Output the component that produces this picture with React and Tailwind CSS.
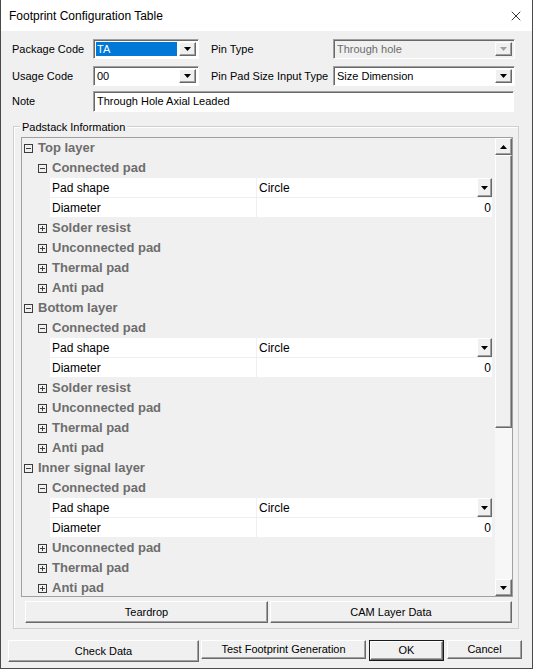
import { X } from "lucide-react";

const raised =
  "border border-t-white border-l-white border-r-[#696969] border-b-[#696969] shadow-[inset_-1px_-1px_0_#a0a0a0]";
const sunken =
  "border border-t-[#a0a0a0] border-l-[#a0a0a0] border-r-white border-b-white shadow-[inset_1px_1px_0_#696969]";

const Arrow = ({ dir = "down", disabled }) => (
  <svg width="7" height="4" viewBox="0 0 7 4" className={dir === "up" ? "rotate-180" : ""}>
    <path d="M0 0h7L3.5 4z" fill={disabled ? "#a0a0a0" : "#000"} />
  </svg>
);

const DropBtn = ({ disabled, className = "" }) => (
  <div className={`flex items-center justify-center bg-[#f0f0f0] ${raised} ${className}`}>
    <Arrow disabled={disabled} />
  </div>
);

const Combo = ({ value, width, selected, disabled }) => (
  <div
    className={`flex h-[20px] items-stretch p-[2px] ${sunken} ${disabled ? "bg-[#f0f0f0]" : "bg-white"}`}
    style={{ width }}
  >
    <div className="flex flex-1 items-center pr-[2px]">
      <span
        className={`flex h-full flex-1 items-center pl-[1px] text-[11px] ${
          selected ? "bg-[#0078d7] text-white" : disabled ? "text-[#6d6d6d]" : "text-black"
        }`}
      >
        {value}
      </span>
    </div>
    <DropBtn disabled={disabled} className="w-[17px]" />
  </div>
);

const Button = ({ children, className = "", def }) => (
  <div className={def ? "border border-[#1a1a1a]" : ""}>
    <div className={`flex h-full items-center justify-center bg-[#f0f0f0] text-[11px] text-black ${raised} ${className}`}>
      {children}
    </div>
  </div>
);

const Box = ({ open }) => (
  <span className="relative inline-block h-[9px] w-[9px] shrink-0 border border-[#3c3c3c]">
    <span className="absolute left-[1px] top-[3px] h-px w-[5px] bg-[#3c3c3c]" />
    {!open && <span className="absolute left-[3px] top-[1px] h-[5px] w-px bg-[#3c3c3c]" />}
  </span>
);

const rows = [
  { t: "g", label: "Top layer", open: true },
  { t: "s", label: "Connected pad", open: true },
  { t: "p", label: "Pad shape", value: "Circle", drop: true },
  { t: "p", label: "Diameter", value: "0" },
  { t: "s", label: "Solder resist" },
  { t: "s", label: "Unconnected pad" },
  { t: "s", label: "Thermal pad" },
  { t: "s", label: "Anti pad" },
  { t: "g", label: "Bottom layer", open: true },
  { t: "s", label: "Connected pad", open: true },
  { t: "p", label: "Pad shape", value: "Circle", drop: true },
  { t: "p", label: "Diameter", value: "0" },
  { t: "s", label: "Solder resist" },
  { t: "s", label: "Unconnected pad" },
  { t: "s", label: "Thermal pad" },
  { t: "s", label: "Anti pad" },
  { t: "g", label: "Inner signal layer", open: true },
  { t: "s", label: "Connected pad", open: true },
  { t: "p", label: "Pad shape", value: "Circle", drop: true },
  { t: "p", label: "Diameter", value: "0" },
  { t: "s", label: "Unconnected pad" },
  { t: "s", label: "Thermal pad" },
  { t: "s", label: "Anti pad" },
];

const TreeRow = ({ row }) => {
  if (row.t === "p") {
    return (
      <div className="ml-[28px] mr-[3px] flex h-[20px] border-b border-[#f0f0f0] bg-white text-[12px] text-black">
        <div className="flex w-[207px] items-center border-r border-[#f0f0f0] pl-[2px]">{row.label}</div>
        {row.drop ? (
          <div className="flex flex-1 items-center justify-between pl-[2px]">
            <span>{row.value}</span>
            <DropBtn className="h-[19px] w-[15px]" />
          </div>
        ) : (
          <div className="flex flex-1 items-center justify-end pr-[1px]">{row.value}</div>
        )}
      </div>
    );
  }
  return (
    <div className={`flex h-[20px] items-center gap-[5px] ${row.t === "g" ? "pl-[2px]" : "pl-[16px]"}`}>
      <Box open={row.open} />
      <span className="text-[13px] font-bold text-[#6d6d6d]">{row.label}</span>
    </div>
  );
};

export default function App() {
  return (
    <div className="flex h-[669px] w-[533px] flex-col overflow-hidden border-x border-b border-[#4a4a4a] bg-[#f0f0f0] font-['Liberation_Sans',Arial,sans-serif] text-black">
      {/* title bar */}
      <div className="flex h-[31px] shrink-0 items-center justify-between bg-white pl-[8px] pr-[8px]">
        <span className="text-[12px]">Footprint Configuration Table</span>
        <X size={16} strokeWidth={1.2} className="text-black" />
      </div>

      {/* header fields */}
      <div className="pl-[11px] pt-[8px] text-[11px]">
        <div className="flex h-[20px] items-center">
          <span className="w-[81px]">Package Code</span>
          <Combo value="TA" width={106} selected />
          <span className="ml-[12px] w-[122px]">Pin Type</span>
          <Combo value="Through hole" width={182} disabled />
        </div>
        <div className="mt-[7px] flex h-[20px] items-center">
          <span className="w-[81px]">Usage Code</span>
          <Combo value="00" width={106} />
          <span className="ml-[12px] w-[122px]">Pin Pad Size Input Type</span>
          <Combo value="Size Dimension" width={182} />
        </div>
        <div className="mt-[5px] flex h-[21px] items-center">
          <span className="w-[81px]">Note</span>
          <div className={`flex h-[21px] w-[421px] items-center bg-white pl-[3px] text-[11px] ${sunken}`}>
            Through Hole Axial Leaded
          </div>
        </div>
      </div>

      {/* padstack group */}
      <div className="relative ml-[12px] mt-[14px] w-[506px] border border-[#cfcfcf] pb-[5px] pl-[7px] pr-[5px] pt-[10px] shadow-[inset_1px_1px_0_white]">
        <span className="absolute -top-[8px] left-[6px] bg-[#f0f0f0] px-[2px] text-[11px]">Padstack Information</span>

        <div className="flex h-[460px] border border-[#a0a0a0]">
          <div className="flex-1 overflow-hidden">
            {rows.map((r, i) => (
              <TreeRow key={i} row={r} />
            ))}
          </div>
          <div className="flex w-[17px] flex-col bg-[#f7f7f7]">
            <div className={`flex h-[17px] items-center justify-center bg-[#f0f0f0] ${raised}`}>
              <Arrow dir="up" />
            </div>
            <div className={`h-[273px] bg-[#f0f0f0] ${raised}`} />
            <div className="flex-1" />
            <div className={`flex h-[17px] items-center justify-center bg-[#f0f0f0] ${raised}`}>
              <Arrow />
            </div>
          </div>
        </div>

        <div className="mt-[4px] flex h-[22px] gap-[2px] pl-[4px]">
          <Button className="w-[243px]">Teardrop</Button>
          <Button className="w-[242px]">CAM Layer Data</Button>
        </div>
      </div>

      {/* bottom buttons */}
      <div className="mt-[11px] flex h-[22px] pl-[7px]">
        <Button className="w-[191px]">Check Data</Button>
        <div className="ml-[2px]">
          <Button className="w-[165px]">Test Footprint Generation</Button>
        </div>
        <div className="ml-[3px]">
          <Button def className="w-[73px]">OK</Button>
        </div>
        <div className="ml-[3px]">
          <Button className="w-[75px]">Cancel</Button>
        </div>
      </div>
    </div>
  );
}
